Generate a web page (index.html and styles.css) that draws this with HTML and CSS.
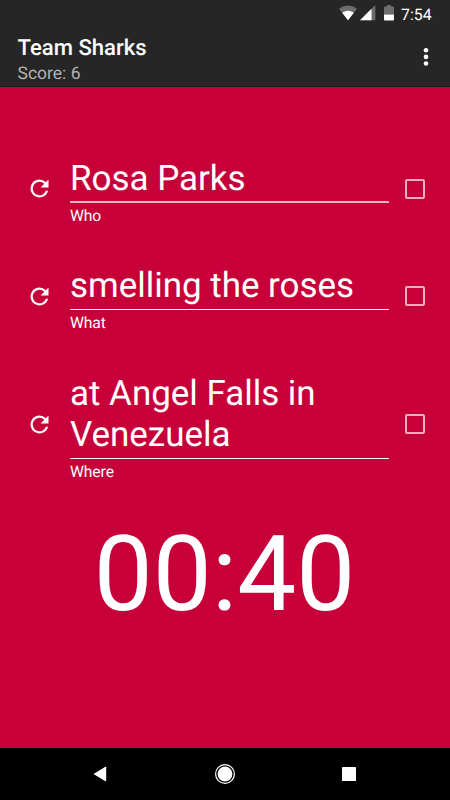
FILE: index.html
```html
<!DOCTYPE html>
<html lang="en">
<head>
<meta charset="utf-8">
<title>Team Sharks</title>
<link rel="stylesheet" href="styles.css">
</head>
<body>
<div class="screen">
  <header class="top">
    <div class="status">
      <svg class="wifi" width="18" height="16" viewBox="0 0 18 16"><path d="M0 3.8Q9-3 18 3.8L9 15.3Z" fill="#6d6d6d"/><path d="M3.2 7.8Q9 3.6 14.8 7.8L9 15.3Z" fill="#fff"/></svg>
      <svg class="signal" width="16" height="16" viewBox="0 0 16 16"><path d="M15.3 0V15.3H0Z" fill="#6d6d6d"/><path d="M11.5 3.8V15.3H0Z" fill="#fff"/></svg>
      <svg class="battery" width="10" height="16" viewBox="0 0 10 16"><path d="M3 0h4v1.5h2q1 0 1 1V9.5H0V2.5q0-1 1-1h2Z" fill="#6d6d6d"/><path d="M0 9.5h10v5.1q0 1-1 1H1q-1 0-1-1Z" fill="#fff"/></svg>
      <span class="clock">7:54</span>
    </div>
    <div class="toolbar">
      <div class="titles">
        <h1 class="title">Team Sharks</h1>
        <p class="score">Score: 6</p>
      </div>
      <svg class="more" width="6" height="20" viewBox="0 0 6 20"><g fill="#fff"><circle cx="3" cy="3.3" r="2.3"/><circle cx="3" cy="9.9" r="2.3"/><circle cx="3" cy="16.5" r="2.3"/></g></svg>
    </div>
  </header>
  <main class="game">
    <section class="row">
      <svg class="refresh" viewBox="0 0 24 24"><path d="M17.65 6.35A7.96 7.96 0 0 0 12 4a8 8 0 1 0 7.73 10h-2.08A6 6 0 1 1 12 6c1.66 0 3.14.69 4.22 1.78L13 11h7V4z"/></svg>
      <div class="field"><div class="value value-active">Rosa Parks</div><div class="label">Who</div></div>
      <span class="check"></span>
    </section>
    <section class="row">
      <svg class="refresh" viewBox="0 0 24 24"><path d="M17.65 6.35A7.96 7.96 0 0 0 12 4a8 8 0 1 0 7.73 10h-2.08A6 6 0 1 1 12 6c1.66 0 3.14.69 4.22 1.78L13 11h7V4z"/></svg>
      <div class="field"><div class="value">smelling the roses</div><div class="label">What</div></div>
      <span class="check"></span>
    </section>
    <section class="row">
      <svg class="refresh" viewBox="0 0 24 24"><path d="M17.65 6.35A7.96 7.96 0 0 0 12 4a8 8 0 1 0 7.73 10h-2.08A6 6 0 1 1 12 6c1.66 0 3.14.69 4.22 1.78L13 11h7V4z"/></svg>
      <div class="field"><div class="value">at Angel Falls in Venezuela</div><div class="label">Where</div></div>
      <span class="check"></span>
    </section>
    <div class="timer">00:40</div>
  </main>
  <nav class="nav">
    <svg width="14" height="16" viewBox="0 0 14 16"><path d="M.5 8 12.4.8q.8-.4.8.5v13.4q0 .9-.8.5Z" fill="#fff"/></svg>
    <svg width="22" height="22" viewBox="0 0 22 22"><circle cx="11" cy="11" r="9.4" fill="none" stroke="#fff" stroke-width="1.2"/><circle cx="11" cy="11" r="7.4" fill="#fff"/></svg>
    <svg width="14" height="14" viewBox="0 0 14 14"><rect width="14" height="14" rx=".6" fill="#fff"/></svg>
  </nav>
</div>
</body>
</html>
```
FILE: styles.css
```css
* { box-sizing: border-box; }
body { margin: 0; font-family: Roboto, sans-serif; color: #fff; text-rendering: geometricPrecision; }
.screen { width: 450px; height: 800px; display: flex; flex-direction: column; background: #c7003a; overflow: hidden; }
svg { display: block; flex: none; }

.top { height: 87px; flex: none; background: #262626; border-bottom: 1px solid #152222; }
.status { height: 26px; display: flex; align-items: center; justify-content: flex-end; padding: 0 17px 0 0; }
.signal { margin-left: 3px; }
.battery { margin-left: 8px; }
.clock { width: 32px; margin: 3px 0 0 7px; font-size: 15.9px; line-height: 18px; white-space: nowrap; }
.toolbar { height: 60px; display: flex; justify-content: space-between; padding: 7px 21px 0 17.5px; }
.title, .score { margin: 0; }
.title { padding-top: 2px; font-size: 22.1px; line-height: 26px; font-weight: 500; }
.score { font-size: 17.5px; line-height: 20px; margin-top: 2.5px; color: #b3b3b3; }
.more { margin-top: 14px; }

.game { flex: 1; padding-top: 65px; display: flex; flex-direction: column; gap: 34.5px; }
.row { display: flex; align-items: center; padding: 0 25px 0 25.5px; }
.refresh { width: 27px; height: 27px; fill: #fff; margin-right: 17.5px; }
.field { width: 319px; padding-top: 5.5px; }
.value { font-size: 35px; line-height: 41px; padding-bottom: 3px; border-bottom: 1px solid #fff; letter-spacing: -0.03px; }
.value-active { padding-bottom: 2px; border-bottom: 2px solid #f0b7bc; }
.label { font-size: 15.7px; line-height: 18px; margin-top: 4px; margin-bottom: .5px; letter-spacing: -0.1px; }
.check { width: 20px; height: 20px; margin-left: auto; border: 2px solid #f0adc0; border-radius: 2px; }
.timer { margin-top: -3px; padding-right: 1px; text-align: center; font-size: 105px; line-height: 123px; }

.nav { height: 52px; flex: none; display: flex; align-items: center; justify-content: space-between; padding: 0 94px 0 93px; background: #000; }
```
